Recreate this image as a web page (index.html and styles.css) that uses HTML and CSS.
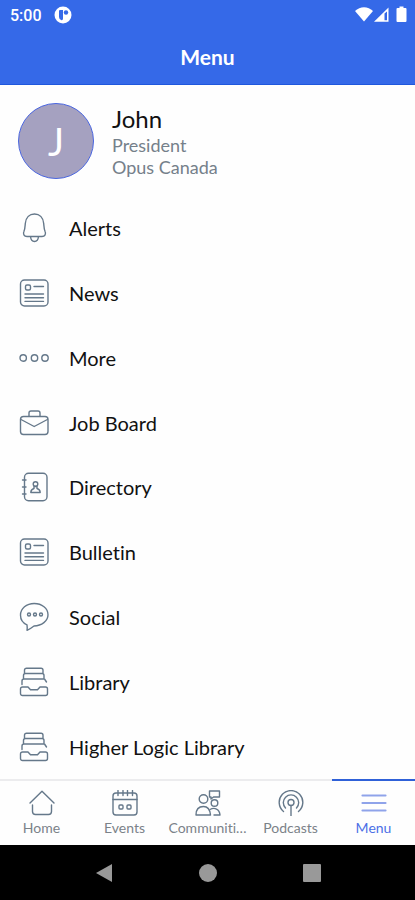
FILE: index.html
```html
<!DOCTYPE html>
<html lang="en">
<head>
    <meta charset="UTF-8">
    <meta name="viewport" content="width=device-width, initial-scale=1.0">
    <title>Menu</title>
    <link rel="stylesheet" href="styles.css">
</head>
<body>
    <!-- icons used more than once -->
    <svg class="sprite" aria-hidden="true">
        <symbol id="icon-news" viewBox="0 0 30 30">
            <rect x="1.5" y="2" width="27.500" height="26" rx="4"/>
            <rect x="6.5" y="7" width="5" height="5" rx="1.5"/>
            <path d="M15 8.5h9.5M6 16h18.5M6 19.7h18.5M6 23.4h18.5"/>
        </symbol>
        <symbol id="icon-library" viewBox="0 0 30 30">
            <path d="M5.5 6.500V3.200a2 2 0 0 1 2-2H22a2 2 0 0 1 2 2v3.300M5.500 6.500H24M4.500 11V8.500a2 2 0 0 1 2-2H23a2 2 0 0 1 2 2V11M5 12h20.500M3 17.500V14a2 2 0 0 1 2-2h20.500L27.500 15"/>
            <path d="M3.500 20H9l2.500 2.800h7L21 20h5.500a2 2 0 0 1 2 2v4.500a2 2 0 0 1-2 2h-23a2 2 0 0 1-2-2V22a2 2 0 0 1 2-2z"/>
        </symbol>
    </svg>

    <header class="header">
        <div class="status-bar">
            <div class="status-left">
                <span>5:00</span>
                <svg class="status-app" viewBox="0 0 18 18">
                    <circle cx="9" cy="9" r="8.5" fill="#fff"/>
                    <path d="M5 5q0-1 1-1h3v8.500q0 2-1.500 1.800Q5 13.500 5 11z" fill="#3569e8"/>
                    <circle cx="12" cy="6.500" r="2.200" fill="#3569e8"/>
                </svg>
            </div>
            <svg class="status-icons" viewBox="0 0 52 18">
                <path d="M0 5C5-.1 13-.1 18 5l-9 10.5z" fill="#fff"/>
                <path d="M19 15.800L33.500 1.500v14.300z" fill="#fff"/>
                <path d="M29.500 7.500l2.500-2v8.800h-2.500z" fill="#3569e8"/>
                <path d="M42.500 2h2V.5h4V2h2q1 0 1 1v12q0 1-1 1h-8q-1 0-1-1V3q0-1 1-1z" fill="#fff"/>
            </svg>
        </div>
        <h1>Menu</h1>
    </header>

    <main class="content">
        <section class="profile">
            <div class="avatar">J</div>
            <div class="profile-info">
                <h2>John</h2>
                <p>President</p>
                <p>Opus Canada</p>
            </div>
        </section>

        <ul class="menu-list">
            <li>
                <a href="#alerts">
                    <svg class="icon" viewBox="0 0 30 30">
                        <path d="M11.500 23.500H8c-3 0-4.300-2.500-3-5.200 1-2.300 1-4.300 1.300-7.800C6.800 4.500 10.500 1 15.500 1s8.700 3.500 9.200 9.500c.3 3.500.3 5.500 1.300 7.800 1.300 2.700 0 5.200-3 5.200zM11.500 23.500c.3 3 1.500 5 4 5s3.700-2 4-5"/>
                    </svg>
                    <span>Alerts</span>
                </a>
            </li>
            <li>
                <a href="#news">
                    <svg class="icon"><use href="#icon-news"/></svg>
                    <span>News</span>
                </a>
            </li>
            <li>
                <a href="#more">
                    <svg class="icon" viewBox="0 0 30 30">
                        <circle cx="4.200" cy="15" r="3.200"/>
                        <circle cx="15.500" cy="15" r="3.200"/>
                        <circle cx="26" cy="15" r="3.200"/>
                    </svg>
                    <span>More</span>
                </a>
            </li>
            <li>
                <a href="#jobs">
                    <svg class="icon" viewBox="0 0 30 30">
                        <rect x="1.500" y="8.500" width="27.500" height="18" rx="3"/>
                        <path d="M10 8V5a2 2 0 0 1 2-2h7a2 2 0 0 1 2 2v3M2 11.500l13.200 7 13.200-7"/>
                    </svg>
                    <span>Job Board</span>
                </a>
            </li>
            <li>
                <a href="#directory">
                    <svg class="icon" viewBox="0 0 30 30">
                        <rect x="5.500" y="1.200" width="22.500" height="27.500" rx="4"/>
                        <path d="M3.500 8H7M3.500 15H7M3.500 22H7"/>
                        <circle cx="16.500" cy="12" r="2.300"/>
                        <path d="M11.800 20.500h9.400q0-3-3.200-4v-2h-3v2q-3.200 1-3.200 4z"/>
                    </svg>
                    <span>Directory</span>
                </a>
            </li>
            <li>
                <a href="#bulletin">
                    <svg class="icon"><use href="#icon-news"/></svg>
                    <span>Bulletin</span>
                </a>
            </li>
            <li>
                <a href="#social">
                    <svg class="icon" viewBox="0 0 30 30">
                        <path d="M8 22.800C4 21 1.500 17.500 1.500 13.200 1.500 6.500 7.500 1.500 15.200 1.500s13.800 5 13.800 11.200-6.300 11.200-14 11.300c-2.500 2-4.500 3.200-7 4.300.3-2 .3-3.500 0-5.500z"/>
                        <circle cx="10" cy="12.500" r="1.500"/>
                        <circle cx="16" cy="12.500" r="1.500"/>
                        <circle cx="22" cy="12.500" r="1.500"/>
                    </svg>
                    <span>Social</span>
                </a>
            </li>
            <li>
                <a href="#library">
                    <svg class="icon"><use href="#icon-library"/></svg>
                    <span>Library</span>
                </a>
            </li>
            <li>
                <a href="#higher-logic">
                    <svg class="icon"><use href="#icon-library"/></svg>
                    <span>Higher Logic Library</span>
                </a>
            </li>
        </ul>
    </main>

    <nav class="tab-bar">
        <a href="#home">
            <svg class="tab-icon" viewBox="0 0 26 26">
                <path d="M1 13L13 1.300 25 13M3.500 15v6.500a3 3 0 0 0 3 3h13a3 3 0 0 0 3-3V15"/>
            </svg>
            <span>Home</span>
        </a>
        <a href="#events">
            <svg class="tab-icon" viewBox="0 0 26 26">
                <rect x="1" y="3" width="24" height="22" rx="3"/>
                <path d="M1 9.500h24M6 .5v5M11 .5v5M15.500 .5v5M20.500 .5v5"/>
                <rect x="7" y="15" width="4" height="4" rx="1"/>
                <rect x="15" y="15" width="4" height="4" rx="1"/>
            </svg>
            <span>Events</span>
        </a>
        <a href="#communities">
            <svg class="tab-icon" viewBox="0 0 26 26">
                <circle cx="8.500" cy="9" r="4.300"/>
                <path d="M1 25c0-5.500 3-8.500 7.500-8.500 4.300 0 6.500 3 7 8.500zM14.500 1h10v6h-6l-2.500 2V7h-1.500z"/>
                <circle cx="19.500" cy="13" r="3.300"/>
                <path d="M15 19.500c4.500-2.500 9.500-.5 10 5.500h-6"/>
            </svg>
            <span>Communiti…</span>
        </a>
        <a href="#podcasts">
            <svg class="tab-icon" viewBox="0 0 26 26">
                <path d="M5.500 21.500A11.800 11.800 0 1 1 20.500 21.500M7.500 18a7.700 7.700 0 1 1 11 0"/>
                <circle cx="13" cy="12.500" r="3"/>
                <path d="M13 15.500V26"/>
            </svg>
            <span>Podcasts</span>
        </a>
        <a href="#menu" class="active" aria-current="page">
            <svg class="tab-icon" viewBox="0 0 26 26">
                <path d="M1.500 5.500h23M1.500 13h23M1.500 20.500h23"/>
            </svg>
            <span>Menu</span>
        </a>
    </nav>

    <div class="system-bar">
        <button aria-label="Back"><svg viewBox="0 0 20 20"><path d="M18 1v18L2 10z"/></svg></button>
        <button aria-label="Home"><svg viewBox="0 0 20 20"><circle cx="10" cy="10" r="9"/></svg></button>
        <button aria-label="Recent apps"><svg viewBox="0 0 20 20"><rect x="1" y="1" width="18" height="18" rx="1"/></svg></button>
    </div>
</body>
</html>
```
FILE: styles.css
```css
* {
    box-sizing: border-box;
    margin: 0;
    padding: 0;
}

body {
    display: flex;
    flex-direction: column;
    min-height: 100vh;
    background: #fefefe;
    font-family: Lato, "Liberation Sans", sans-serif;
    font-variant-ligatures: none;
    color: #111;
}

a {
    color: inherit;
    text-decoration: none;
}

.sprite {
    display: none;
}

.header {
    background: #3569e8;
    border-bottom: 1px solid #1f57dc;
    color: #fff;
}

.status-bar {
    display: flex;
    justify-content: space-between;
    align-items: center;
    height: 30px;
    padding: 0 8px 0 10px;
    font-family: Roboto, sans-serif;
    font-size: 16px;
    font-weight: 500;
}

.status-left {
    display: flex;
    align-items: center;
    gap: 12px;
}

.status-app {
    width: 18px;
    height: 18px;
}

.status-icons {
    width: 52px;
    height: 18px;
}

.header h1 {
    font-size: 21px;
    font-weight: 700;
    line-height: 54px;
    text-align: center;
}

.content {
    flex: 1;
    display: flex;
    flex-direction: column;
}

.profile {
    display: flex;
    align-items: center;
    gap: 18px;
    height: 111px;
    padding: 0 18px;
}

.avatar {
    width: 76px;
    height: 76px;
    border: 1px solid #4a66e0;
    border-radius: 50%;
    background: #a5a1c0;
    color: #fff;
    font-size: 38px;
    line-height: 74px;
    text-align: center;
}

.profile-info h2 {
    font-size: 24px;
    font-weight: 400;
    line-height: 30px;
}

.profile-info p {
    color: #75808a;
    font-size: 18px;
    line-height: 22px;
}

.menu-list {
    flex: 1;
    display: grid;
    grid-auto-rows: 1fr;
    list-style: none;
}

.menu-list a {
    display: flex;
    align-items: center;
    gap: 20px;
    height: 100%;
    padding: 0 19px;
    font-size: 20px;
}

.icon,
.tab-icon {
    fill: none;
    stroke: #65788a;
    stroke-width: 1.4;
    stroke-linecap: round;
    stroke-linejoin: round;
}

.icon {
    width: 30px;
    height: 30px;
}

.tab-bar {
    display: grid;
    grid-template-columns: repeat(5, 1fr);
    height: 66px;
}

.tab-bar a {
    display: flex;
    flex-direction: column;
    align-items: center;
    min-width: 0;
    padding-top: 9px;
    border-top: 2px solid #ececee;
    color: #7b8289;
    font-size: 14px;
    line-height: 24px;
    white-space: nowrap;
}

.tab-bar .active {
    border-color: #2f61d8;
    color: #4c70e6;
}

.tab-icon {
    width: 26px;
    height: 26px;
}

.active .tab-icon {
    stroke: #8fa3ea;
    stroke-width: 2.2;
}

.system-bar {
    display: flex;
    justify-content: center;
    align-items: center;
    gap: 84px;
    height: 55px;
    background: #000;
}

.system-bar button {
    width: 20px;
    height: 20px;
    border: none;
    background: none;
}

.system-bar svg {
    display: block;
    fill: #999;
}
```
